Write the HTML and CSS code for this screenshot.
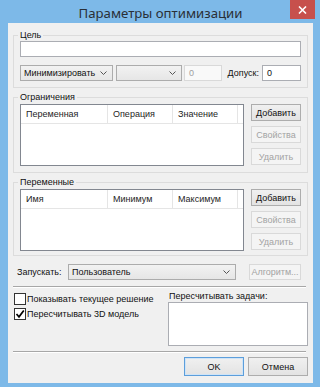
FILE: index.html
```html
<!DOCTYPE html>
<html lang="ru">
<head>
  <meta charset="UTF-8">
  <title>Параметры оптимизации</title>
  <link rel="stylesheet" href="styles.css">
</head>
<body>

  <div class="window">
    <div class="titlebar">
      <span></span>
      <span class="title">Параметры оптимизации</span>
      <button class="close" type="button">
        <svg width="9" height="8" viewBox="0 0 9 8"><path d="M1 0.5 L8 7.5 M8 0.5 L1 7.5" stroke="#fff" stroke-width="1.6" fill="none"/></svg>
      </button>
    </div>

    <div class="client">
      <fieldset class="group goal">
        <legend>Цель</legend>
        <div class="field"></div>
        <div class="goal-row">
          <div class="combo combo-mode">
            <span>Минимизировать</span>
            <svg width="7" height="4" viewBox="0 0 7 4"><path d="M0.5 0.5 L3.5 3.5 L6.5 0.5" stroke="#555" fill="none"/></svg>
          </div>
          <div class="combo combo-value">
            <span></span>
            <svg width="7" height="4" viewBox="0 0 7 4"><path d="M0.5 0.5 L3.5 3.5 L6.5 0.5" stroke="#555" fill="none"/></svg>
          </div>
          <div class="field field-disabled">0</div>
          <label class="tol-label">Допуск:</label>
          <div class="field field-tol">0</div>
        </div>
      </fieldset>

      <fieldset class="group">
        <legend>Ограничения</legend>
        <div class="list-row">
          <div class="list">
            <div class="list-head">
              <span class="col col-1">Переменная</span>
              <span class="col">Операция</span>
              <span class="col">Значение</span>
            </div>
          </div>
          <div class="side-buttons">
            <button type="button" class="btn">Добавить</button>
            <button type="button" class="btn" disabled>Свойства</button>
            <button type="button" class="btn" disabled>Удалить</button>
          </div>
        </div>
      </fieldset>

      <fieldset class="group vars">
        <legend>Переменные</legend>
        <div class="list-row">
          <div class="list">
            <div class="list-head">
              <span class="col col-1">Имя</span>
              <span class="col">Минимум</span>
              <span class="col">Максимум</span>
            </div>
          </div>
          <div class="side-buttons">
            <button type="button" class="btn">Добавить</button>
            <button type="button" class="btn" disabled>Свойства</button>
            <button type="button" class="btn" disabled>Удалить</button>
          </div>
        </div>
      </fieldset>

      <div class="run-row">
        <label class="run-label">Запускать:</label>
        <div class="combo combo-run">
          <span>Пользователь</span>
          <svg width="7" height="4" viewBox="0 0 7 4"><path d="M0.5 0.5 L3.5 3.5 L6.5 0.5" stroke="#555" fill="none"/></svg>
        </div>
        <button type="button" class="btn btn-algo" disabled>Алгоритм...</button>
      </div>

      <div class="separator"></div>

      <div class="options">
        <div class="checks">
          <label class="check">
            <span class="box"></span>
            Показывать текущее решение
          </label>
          <label class="check">
            <span class="box">
              <svg width="10" height="10" viewBox="0 0 10 10"><path d="M1.5 5 L4 7.8 L8.8 1.5" stroke="#000" stroke-width="1.7" fill="none"/></svg>
            </span>
            Пересчитывать 3D модель
          </label>
        </div>
        <div class="tasks">
          <label>Пересчитывать задачи:</label>
          <div class="textarea"></div>
        </div>
      </div>

      <div class="separator"></div>

      <div class="footer">
        <button type="button" class="btn btn-dialog btn-default">OK</button>
        <button type="button" class="btn btn-dialog">Отмена</button>
      </div>
    </div>
  </div>

</body>
</html>
```

FILE: styles.css
```css
* {
  box-sizing: border-box;
}

body {
  margin: 0;
  font-family: "Liberation Sans", Arial, sans-serif;
  font-size: 9px;
  color: #111;
}

.window {
  width: 320px;
  height: 387px;
  background: #7db9e8;
  padding: 0 7px 4px 8px;
  display: flex;
  flex-direction: column;
}

.titlebar {
  height: 23px;
  display: grid;
  grid-template-columns: 1fr auto 1fr;
  align-items: start;
}

.title {
  font-family: "Noto Sans", "Open Sans", sans-serif;
  font-size: 13.2px;
  line-height: 18px;
  padding-top: 4px;
  color: #2a2f36;
}

.close {
  justify-self: end;
  margin-right: -2px;
  width: 25px;
  height: 19px;
  border: none;
  padding: 0;
  background: #c7504c;
  display: flex;
  align-items: center;
  justify-content: center;
}

.client {
  flex: 1;
  background: #f0f0f0;
  padding: 6px 5px 7px 5px;
  display: flex;
  flex-direction: column;
}

.group {
  margin: 0;
  min-width: 0;
  border: 1px solid #dcdcdc;
  padding: 0 6px 6px 6px;
}

.group + .group {
  margin-top: 3px;
}

.group legend {
  padding: 0 2px;
  margin-left: -2px;
  line-height: 12px;
}

.vars {
  padding-bottom: 4px;
}

.field {
  height: 16px;
  background: #fff;
  border: 1px solid #abadb3;
  padding: 0 4px;
  line-height: 14px;
}

.goal-row {
  display: flex;
  margin-top: 8px;
  height: 16px;
}

.combo {
  height: 16px;
  border: 1px solid #acacac;
  background: linear-gradient(#f2f2f2, #e6e6e6);
  display: flex;
  align-items: center;
  justify-content: space-between;
  padding: 0 5px 0 3px;
  white-space: nowrap;
}

.combo-mode {
  width: 93px;
  margin-right: 3px;
}

.combo-value {
  width: 66px;
  margin-right: 2px;
}

.field-disabled {
  width: 38px;
  border-color: #d9d9d9;
  background: #f9f9f9;
  color: #a0a0a0;
}

.tol-label {
  flex: 1;
  text-align: right;
  padding-right: 3px;
  line-height: 16px;
}

.field-tol {
  width: 39px;
}

.list-row {
  display: flex;
  margin-top: 1px;
}

.list {
  width: 224px;
  height: 62px;
  background: #fff;
  border: 1px solid #828790;
}

.list-head {
  display: flex;
  height: 19px;
  border-bottom: 1px solid #e5e5e5;
}

.col {
  width: 65px;
  border-right: 1px solid #e5e5e5;
  padding-left: 5px;
  line-height: 18px;
  color: #1e1e1e;
}

.col-1 {
  width: 87px;
}

.side-buttons {
  margin-left: auto;
  display: flex;
  flex-direction: column;
  gap: 5px;
}

.btn {
  font-family: inherit;
  font-size: 9px;
  color: #111;
  height: 17px;
  width: 50px;
  padding: 0;
  border: 1px solid #adadad;
  background: linear-gradient(#f0f0f0, #e3e3e3);
}

.btn:disabled {
  color: #a3a3a3;
  border-color: #d9d9d9;
  background: #f4f4f4;
}

.run-row {
  display: flex;
  align-items: center;
  margin-top: 8px;
  height: 16px;
  padding-left: 4px;
}

.run-label {
  width: 51px;
}

.combo-run {
  width: 168px;
}

.btn-algo {
  width: 52px;
  height: 16px;
  margin-left: auto;
  margin-right: 7px;
}

.separator {
  height: 2px;
  margin-top: 6px;
  margin-right: 2px;
  border-top: 1px solid #a7a7a7;
  border-bottom: 1px solid #fff;
}

.options {
  display: flex;
  margin-top: 3px;
  height: 56px;
}

.checks {
  margin-left: 1px;
  display: flex;
  flex-direction: column;
  white-space: nowrap;
}

.check {
  display: flex;
  align-items: center;
  height: 15px;
  gap: 1px;
}

.box {
  width: 12px;
  height: 12px;
  border: 1px solid #333;
  background: #fff;
  display: flex;
  align-items: center;
  justify-content: center;
}

.tasks {
  margin-left: auto;
  width: 140px;
  display: flex;
  flex-direction: column;
}

.tasks label {
  line-height: 11px;
  padding-left: 1px;
}

.textarea {
  height: 44px;
  background: #fff;
  border: 1px solid #abadb3;
}

.options + .separator {
  margin-top: 4px;
}

.footer {
  display: flex;
  justify-content: flex-end;
  gap: 4px;
  margin-top: 4px;
}

.btn-dialog {
  width: 60px;
  height: 19px;
}

.btn-default {
  border-color: #5c9edb;
  box-shadow: inset 0 0 0 1px #cfe4f7;
}
```
